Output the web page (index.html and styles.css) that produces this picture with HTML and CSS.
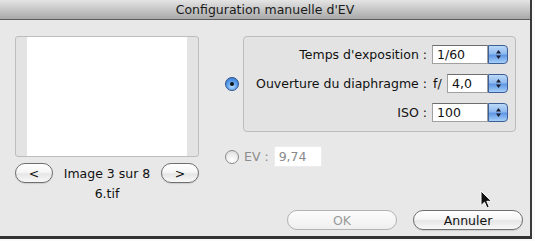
FILE: index.html
```html
<!DOCTYPE html>
<html lang="fr">
<head>
<meta charset="utf-8">
<title>Configuration manuelle d'EV</title>
<link rel="stylesheet" href="styles.css">
</head>
<body>
<div class="window">
  <div class="titlebar">Configuration manuelle d'EV</div>
  <div class="content">
    <div class="main">
      <div class="left">
        <div class="preview"><div class="preview-img"></div></div>
        <div class="nav">
          <button class="pill small">&lt;</button>
          <span class="nav-label">Image 3 sur 8</span>
          <button class="pill small">&gt;</button>
        </div>
        <div class="filename">6.tif</div>
      </div>
      <div class="right">
        <div class="opt-row">
          <span class="radio on"></span>
          <div class="group">
            <div class="grow">
              <span class="label">Temps d'exposition :</span>
              <div class="ctrl"><span class="field">1/60</span><span class="stepper"><svg width="7" height="11" viewBox="0 0 7 11"><path d="M3.5 1 L6 4.5 H1 Z M3.5 10 L6 6.5 H1 Z" fill="#1a1a2a"/></svg></span></div>
            </div>
            <div class="grow">
              <span class="label">Ouverture du diaphragme :</span>
              <div class="ctrl"><span class="prefix">f/</span><span class="field">4,0</span><span class="stepper"><svg width="7" height="11" viewBox="0 0 7 11"><path d="M3.5 1 L6 4.5 H1 Z M3.5 10 L6 6.5 H1 Z" fill="#1a1a2a"/></svg></span></div>
            </div>
            <div class="grow">
              <span class="label">ISO :</span>
              <div class="ctrl"><span class="field">100</span><span class="stepper"><svg width="7" height="11" viewBox="0 0 7 11"><path d="M3.5 1 L6 4.5 H1 Z M3.5 10 L6 6.5 H1 Z" fill="#1a1a2a"/></svg></span></div>
            </div>
          </div>
        </div>
        <div class="ev-row">
          <span class="radio off"></span>
          <span class="ev-label">EV :</span>
          <span class="ev-field">9,74</span>
        </div>
      </div>
    </div>
    <div class="footer">
      <button class="pill wide disabled">OK</button>
      <button class="pill wide">Annuler</button>
    </div>
  </div>
  <svg class="cursor" width="13" height="20" viewBox="0 0 13 20"><path d="M1 1 L1 15.5 L4.5 12.2 L7 18 L9.3 17 L6.8 11.3 L11.5 11.3 Z" fill="#111" stroke="#fff" stroke-width="1" stroke-linejoin="round"/></svg>
</div>
</body>
</html>
```

FILE: styles.css
```css
* { box-sizing: border-box; }
html, body { margin: 0; padding: 0; background: #fbfbfb; }
body {
  font-family: "DejaVu Sans", "Liberation Sans", sans-serif;
  font-size: 12px;
  color: #111;
}
.window {
  position: relative;
  width: 532px;
  height: 239px;
  background: #e8e8e8;
  border-right: 2px solid #3a3a3a;
  border-bottom: 3px solid #333;
  display: flex;
  flex-direction: column;
}
.titlebar {
  height: 20px;
  flex: none;
  background: linear-gradient(#e4e4e4, #a9a9a9);
  border-bottom: 1px solid #5c5c5c;
  text-align: center;
  line-height: 19px;
  font-size: 12.5px;
  color: #1a1a1a;
}
.content {
  flex: 1;
  padding: 16px 0 0 15px;
  display: flex;
  flex-direction: column;
}
.main { display: flex; }
.left { width: 184px; flex: none; display: flex; flex-direction: column; }
.preview {
  height: 121px;
  border: 1px solid #bdbdbd;
  border-radius: 3px;
  background: #e3e3e3;
  padding: 0 11px;
}
.preview-img { height: 100%; background: #fff; }
.nav {
  margin-top: 6px;
  height: 20px;
  display: flex;
  align-items: center;
  justify-content: space-between;
}
.nav-label { font-size: 12.5px; }
.filename { text-align: center; margin-top: 3px; line-height: 16px; font-size: 12.5px; }
.pill {
  font-family: inherit;
  font-size: 12.5px;
  color: #111;
  height: 20px;
  border: 1px solid #6f6f6f;
  border-radius: 10px;
  background: linear-gradient(#ffffff 0%, #f6f6f6 45%, #e6e6e6 55%, #f8f8f8 100%);
  padding: 0;
  line-height: 17px;
  box-shadow: 0 1px 1px rgba(0,0,0,0.12);
}
.pill.small { width: 38px; }
.pill.wide { width: 110px; }
.pill.disabled { color: #9a9a9a; border-color: #b2b2b2; box-shadow: none; background: linear-gradient(#fcfcfc, #efefef); }
.right { margin-left: 24px; display: flex; flex-direction: column; }
.opt-row { display: flex; align-items: center; }
.radio {
  width: 14px; height: 14px; border-radius: 50%;
  flex: none;
  margin-left: 2px;
  position: relative;
}
.radio.on {
  background: radial-gradient(circle at 50% 70%, #b8dcff 0%, #5fa2ee 45%, #2f6fc9 100%);
  border: 1px solid #2a4f8a;
}
.radio.on::after {
  content: ""; position: absolute; left: 4px; top: 4px;
  width: 4px; height: 4px; border-radius: 50%; background: #111;
}
.radio.off {
  background: radial-gradient(circle at 50% 75%, #ffffff 0%, #eeeeee 50%, #d6d6d6 100%);
  border: 1px solid #8a8a8a;
}
.group {
  margin-left: 4px;
  width: 273px;
  height: 96px;
  border: 1px solid #bcbcbc;
  border-radius: 4px;
  background: #e3e3e3;
  padding: 8px 7px 0 0;
  display: flex;
  flex-direction: column;
  gap: 10px;
}
.grow { display: flex; align-items: center; justify-content: flex-end; height: 19px; }
.label { font-size: 12.5px; margin-right: 5px; }
.ctrl { width: 76px; display: flex; align-items: center; height: 19px; }
.prefix { font-size: 12.5px; width: 15px; padding-left: 1px; }
.field {
  flex: 1;
  height: 19px;
  background: #fff;
  border: 1px solid #a0a0a0;
  border-top-color: #6e6e6e;
  padding-left: 4px;
  line-height: 17px;
  font-size: 12.5px;
}
.stepper {
  width: 20px; height: 19px; flex: none;
  border-radius: 0 4px 4px 0;
  border: 1px solid #3e5f96;
  background: linear-gradient(#bcd9f7 0%, #8fbaf0 45%, #5f97e4 55%, #a6d0fa 100%);
  display: flex; align-items: center; justify-content: center;
}
.ev-row { display: flex; align-items: center; margin-top: 14px; height: 21px; }
.ev-label { color: #8c8c8c; margin-left: 5px; font-size: 12.5px; }
.ev-field {
  margin-left: 5px; width: 48px; height: 21px;
  background: #fff;
  border: 1px solid #ececec;
  color: #8a8a8a;
  padding-left: 4px;
  line-height: 19px;
  font-size: 12.5px;
}
.footer {
  margin-top: auto;
  margin-bottom: 6px;
  display: flex;
  justify-content: flex-end;
  gap: 16px;
  padding-right: 7px;
}
.cursor { position: absolute; left: 480px; top: 190px; }
```
